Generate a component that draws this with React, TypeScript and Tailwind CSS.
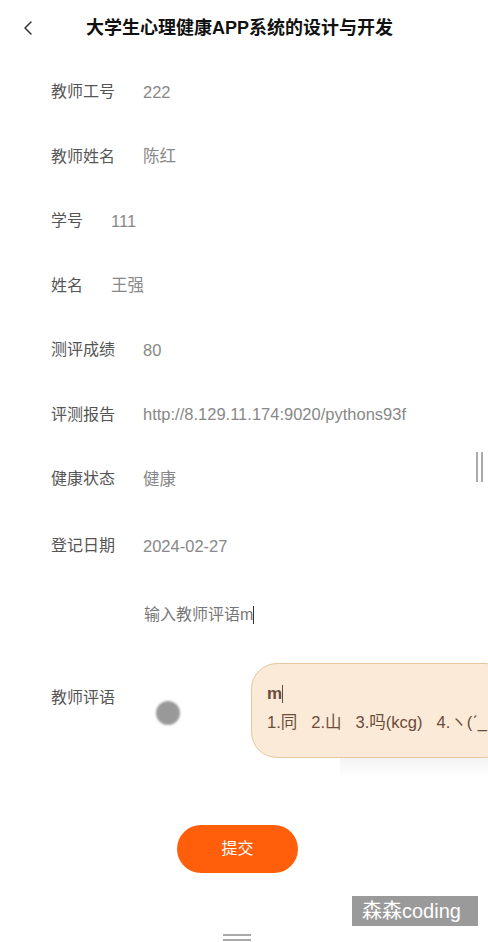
import { ChevronLeft } from 'lucide-react';

const rows = [
  { label: '教师工号', value: '222' },
  { label: '教师姓名', value: '陈红' },
  { label: '学号', value: '111' },
  { label: '姓名', value: '王强' },
  { label: '测评成绩', value: '80' },
  { label: '评测报告', value: 'http://8.129.11.174:9020/pythons93f' },
  { label: '健康状态', value: '健康' },
];

export default function App() {
  return (
    <div
      className="relative w-[488px] h-[942px] overflow-hidden bg-white text-[16px]"
      style={{ fontFamily: '"Liberation Sans", "Noto Sans CJK SC", sans-serif' }}
    >
      {/* header */}
      <div className="flex items-center h-[56px] pl-[16px]">
        <ChevronLeft className="w-[24px] h-[24px] text-[#333]" strokeWidth={1.5} />
        <h1 className="ml-[46px] text-[18px] font-bold text-[#111] leading-none">
          大学生心理健康APP系统的设计与开发
        </h1>
      </div>

      <div className="mt-[4px]">
        {rows.map((r) => (
          <div key={r.label} className="flex items-center h-[64.5px] pl-[51px]">
            <span className="text-[#555] mr-[28px]">{r.label}</span>
            <span className="text-[#888] text-[16.5px]">{r.value}</span>
          </div>
        ))}
        <div className="flex items-center h-[69px] pl-[51px]">
          <span className="text-[#555] mr-[28px]">登记日期</span>
          <span className="text-[#888] text-[16.5px]">2024-02-27</span>
        </div>
        <div className="flex items-center h-[69px] pl-[144px]">
          <span className="text-[#777]">输入教师评语m</span>
          <span className="w-px h-[18px] bg-[#333]" />
        </div>
        <div className="flex items-center h-[97px] pl-[51px]">
          <span className="text-[#555]">教师评语</span>
        </div>
      </div>

      <div className="flex justify-center mt-[78px] pr-[13px]">
        <button className="w-[121px] h-[48px] rounded-full bg-[#ff5e0a] text-white text-[16px]">
          提交
        </button>
      </div>

      {/* overlays */}
      <div className="absolute left-[156px] top-[701px] w-[24px] h-[24px] rounded-full bg-[#999] blur-[1px]" />

      <div className="absolute left-[251px] top-[663px] w-[260px] h-[95px] rounded-[26px] bg-[#fbead8] border-[1.5px] border-[#e6c7a0] pl-[15px] pt-[18px] text-[#6b4c3b]">
        <div className="flex items-center h-[24px]">
          <span className="font-bold text-[17px]">m</span>
          <span className="w-px h-[18px] bg-[#6b4c3b]" />
        </div>
        <div className="flex gap-[14px] mt-[4px] whitespace-nowrap text-[16.5px]">
          <span>1.同</span>
          <span>2.山</span>
          <span>3.吗(kcg)</span>
          <span>4.ヽ(ˊ_</span>
        </div>
      </div>
      <div className="absolute left-[340px] top-[758px] w-[160px] h-[20px] bg-gradient-to-b from-[#f4f4f4] to-white" />

      <div className="absolute left-[476px] top-[452px] w-[2px] h-[30px] bg-[#aaa]" />
      <div className="absolute left-[481px] top-[452px] w-[2px] h-[30px] bg-[#aaa]" />

      <div className="absolute left-[352px] top-[896px] w-[126px] h-[30px] bg-[#9a9a9a] text-white text-[20px] leading-[30px] pl-[10px]">
        森森coding
      </div>

      <div className="absolute left-[223px] top-[934px] w-[28px] h-[2px] bg-[#aaa]" />
      <div className="absolute left-[223px] top-[939px] w-[28px] h-[2px] bg-[#aaa]" />
    </div>
  );
}
